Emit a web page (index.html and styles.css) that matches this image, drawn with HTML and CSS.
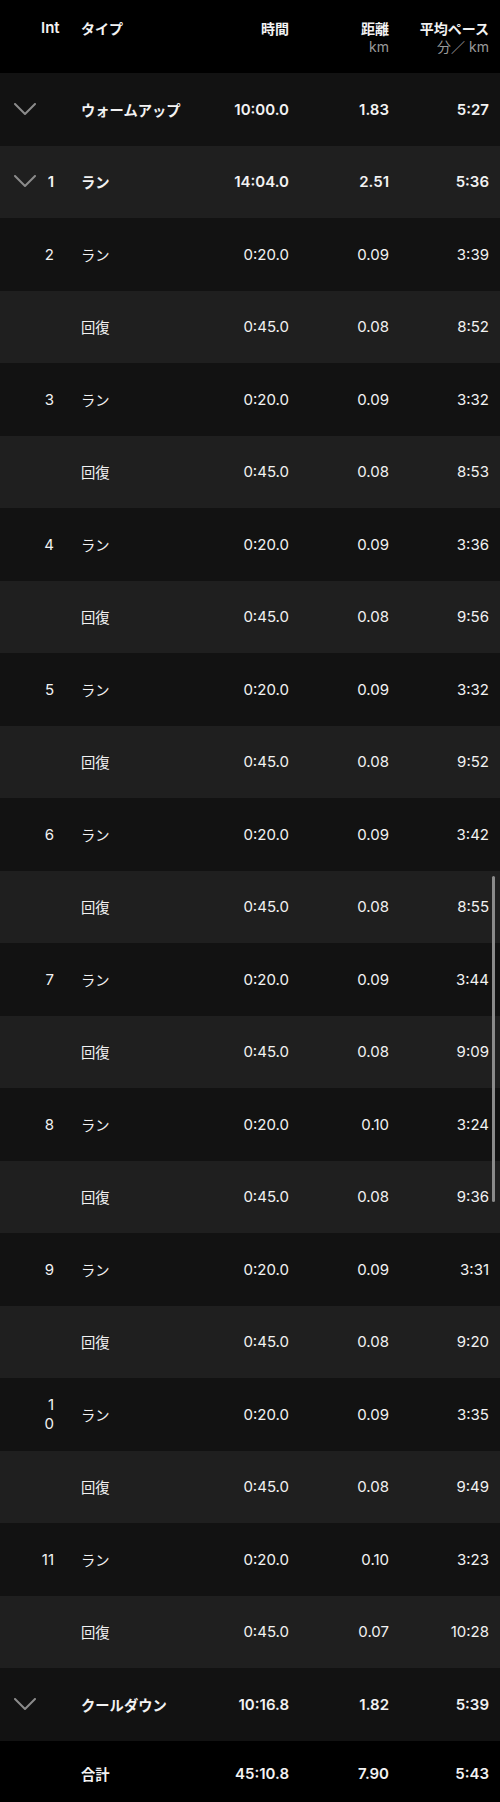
FILE: index.html
```html
<!DOCTYPE html>
<html lang="ja">
<head>
<meta charset="utf-8">
<link rel="stylesheet" href="styles.css">
</head>
<body>
<div class="laps">
  <div class="row head">
    <div class="chev"></div>
    <div class="int">Int</div>
    <div class="type">タイプ</div>
    <div class="num">時間</div>
    <div class="num">距離<span class="unit">km</span></div>
    <div class="num">平均ペース<span class="unit">分／ km</span></div>
  </div>

  <div class="row dark strong">
    <div class="chev"><svg viewBox="0 0 22 13" width="22" height="13"><polyline points="1,1 11,11 21,1"/></svg></div>
    <div class="int"></div>
    <div class="type">ウォームアップ</div>
    <div class="num">10:00.0</div>
    <div class="num">1.83</div>
    <div class="num">5:27</div>
  </div>
  <div class="row light strong">
    <div class="chev"><svg viewBox="0 0 22 13" width="22" height="13"><polyline points="1,1 11,11 21,1"/></svg></div>
    <div class="int">1</div>
    <div class="type">ラン</div>
    <div class="num">14:04.0</div>
    <div class="num">2.51</div>
    <div class="num">5:36</div>
  </div>

  <div class="row dark"><div class="chev"></div><div class="int">2</div><div class="type">ラン</div><div class="num">0:20.0</div><div class="num">0.09</div><div class="num">3:39</div></div>
  <div class="row light"><div class="chev"></div><div class="int"></div><div class="type">回復</div><div class="num">0:45.0</div><div class="num">0.08</div><div class="num">8:52</div></div>
  <div class="row dark"><div class="chev"></div><div class="int">3</div><div class="type">ラン</div><div class="num">0:20.0</div><div class="num">0.09</div><div class="num">3:32</div></div>
  <div class="row light"><div class="chev"></div><div class="int"></div><div class="type">回復</div><div class="num">0:45.0</div><div class="num">0.08</div><div class="num">8:53</div></div>
  <div class="row dark"><div class="chev"></div><div class="int">4</div><div class="type">ラン</div><div class="num">0:20.0</div><div class="num">0.09</div><div class="num">3:36</div></div>
  <div class="row light"><div class="chev"></div><div class="int"></div><div class="type">回復</div><div class="num">0:45.0</div><div class="num">0.08</div><div class="num">9:56</div></div>
  <div class="row dark"><div class="chev"></div><div class="int">5</div><div class="type">ラン</div><div class="num">0:20.0</div><div class="num">0.09</div><div class="num">3:32</div></div>
  <div class="row light"><div class="chev"></div><div class="int"></div><div class="type">回復</div><div class="num">0:45.0</div><div class="num">0.08</div><div class="num">9:52</div></div>
  <div class="row dark"><div class="chev"></div><div class="int">6</div><div class="type">ラン</div><div class="num">0:20.0</div><div class="num">0.09</div><div class="num">3:42</div></div>
  <div class="row light"><div class="chev"></div><div class="int"></div><div class="type">回復</div><div class="num">0:45.0</div><div class="num">0.08</div><div class="num">8:55</div></div>
  <div class="row dark"><div class="chev"></div><div class="int">7</div><div class="type">ラン</div><div class="num">0:20.0</div><div class="num">0.09</div><div class="num">3:44</div></div>
  <div class="row light"><div class="chev"></div><div class="int"></div><div class="type">回復</div><div class="num">0:45.0</div><div class="num">0.08</div><div class="num">9:09</div></div>
  <div class="row dark"><div class="chev"></div><div class="int">8</div><div class="type">ラン</div><div class="num">0:20.0</div><div class="num">0.10</div><div class="num">3:24</div></div>
  <div class="row light"><div class="chev"></div><div class="int"></div><div class="type">回復</div><div class="num">0:45.0</div><div class="num">0.08</div><div class="num">9:36</div></div>
  <div class="row dark"><div class="chev"></div><div class="int">9</div><div class="type">ラン</div><div class="num">0:20.0</div><div class="num">0.09</div><div class="num">3:31</div></div>
  <div class="row light"><div class="chev"></div><div class="int"></div><div class="type">回復</div><div class="num">0:45.0</div><div class="num">0.08</div><div class="num">9:20</div></div>
  <div class="row dark"><div class="chev"></div><div class="int wrap">1<br>0</div><div class="type">ラン</div><div class="num">0:20.0</div><div class="num">0.09</div><div class="num">3:35</div></div>
  <div class="row light"><div class="chev"></div><div class="int"></div><div class="type">回復</div><div class="num">0:45.0</div><div class="num">0.08</div><div class="num">9:49</div></div>
  <div class="row dark"><div class="chev"></div><div class="int">11</div><div class="type">ラン</div><div class="num">0:20.0</div><div class="num">0.10</div><div class="num">3:23</div></div>
  <div class="row light"><div class="chev"></div><div class="int"></div><div class="type">回復</div><div class="num">0:45.0</div><div class="num">0.07</div><div class="num">10:28</div></div>

  <div class="row dark strong">
    <div class="chev"><svg viewBox="0 0 22 13" width="22" height="13"><polyline points="1,1 11,11 21,1"/></svg></div>
    <div class="int"></div>
    <div class="type">クールダウン</div>
    <div class="num">10:16.8</div>
    <div class="num">1.82</div>
    <div class="num">5:39</div>
  </div>
  <div class="row total strong">
    <div class="chev"></div>
    <div class="int"></div>
    <div class="type">合計</div>
    <div class="num">45:10.8</div>
    <div class="num">7.90</div>
    <div class="num">5:43</div>
  </div>
  <div class="scrollbar"></div>
</div>
</body>
</html>
```

FILE: styles.css
```css
* { box-sizing: border-box; }
html, body {
  margin: 0;
  padding: 0;
  background: #000;
}
body {
  font-family: "Inter", "Noto Sans CJK JP", sans-serif;
  font-size: 15px;
  color: #f2f2f2;
  -webkit-font-smoothing: antialiased;
}
.laps {
  position: relative;
  width: 500px;
  height: 1802px;
  overflow: hidden;
}
.row {
  display: grid;
  grid-template-columns: 41px 13px 145px 90px 100px 100px;
  padding-right: 11px;
  height: 72.5px;
  align-items: center;
}
.row.dark { background: #121212; }
.row.light { background: #1f1f1f; }
.row.total { background: #000; height: 66px; }
.row.strong { font-weight: 600; }
.row.head {
  height: 73px;
  align-items: start;
  padding-top: 18px;
  font-weight: 600;
  background: #000;
}
.chev {
  display: flex;
  justify-content: flex-end;
  padding-right: 5px;
}
.chev svg { display: block; }
.chev polyline {
  fill: none;
  stroke: #8b8b8b;
  stroke-width: 2;
  stroke-linecap: round;
  stroke-linejoin: round;
}
.int {
  text-align: right;
  white-space: nowrap;
}
.int.wrap {
  line-height: 19px;
}
.type {
  padding-left: 27px;
  font-family: "Noto Sans CJK JP", sans-serif;
  font-size: 14.3px;
}
.num {
  text-align: right;
  display: flex;
  flex-direction: column;
  align-items: flex-end;
}
.head .type, .head .num {
  font-family: "Noto Sans CJK JP", sans-serif;
  font-size: 14px;
  line-height: 20px;
}
.head .int { line-height: 20px; font-size: 15px; }
.unit {
  font-family: "Inter", "Noto Sans CJK JP", sans-serif;
  font-weight: 400;
  font-size: 14px;
  line-height: 18px;
  color: #9a9a9a;
}
.scrollbar {
  position: absolute;
  right: 5px;
  top: 876px;
  width: 3px;
  height: 326px;
  border-radius: 2px;
  background: #8a8a8a;
}
```
